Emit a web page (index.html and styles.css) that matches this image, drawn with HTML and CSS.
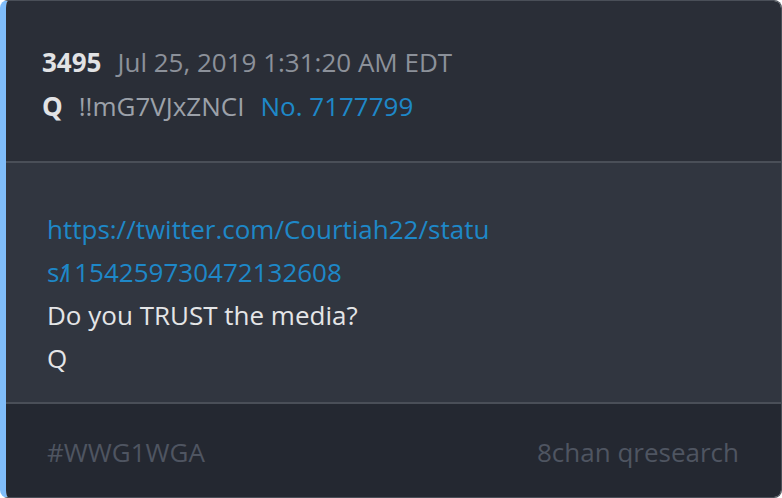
FILE: index.html
```html
<!DOCTYPE html>
<html lang="en">
<head>
  <meta charset="UTF-8" />
  <title>Q drop 3495</title>
  <link rel="stylesheet" href="styles.css">
</head>
<body>

  <div class="post">
    <div class="post-header">
      <div class="meta-row">
        <span class="drop-num">3495</span>
        <span class="date">Jul 25, 2019 1:31:20 AM EDT</span>
      </div>
      <div class="meta-row">
        <span class="author">Q</span>
        <span class="trip">!!mG7VJxZNCI</span>
        <a class="post-no" href="#">No. 7177799</a>
      </div>
    </div>

    <div class="post-body">
      <a class="post-link" href="#">https://twitter.com/Courtiah22/status<span class="tight">/</span>1154259730472132608</a>
      <p>Do you TRUST the media?</p>
      <p>Q</p>
    </div>

    <div class="post-footer">
      <span>#WWG1WGA</span>
      <span>8chan qresearch</span>
    </div>
  </div>

</body>
</html>
```

FILE: styles.css
```css
body {
  margin: 0;
  font-family: 'Open Sans', sans-serif;
  background: #ffffff;
}
.post {
  width: 782px;
  height: 498px;
  box-sizing: border-box;
  display: flex;
  flex-direction: column;
  border: 1px solid #4a4f58;
  border-left: 6px solid #80bdfa;
  border-radius: 8px;
  overflow: hidden;
  font-size: 26px;
  line-height: 43px;
}
.post-header {
  background: #2a2e37;
  padding: 39px 36px 33px;
  border-bottom: 2px solid #4a4f58;
  line-height: 44px;
}
.meta-row {
  display: flex;
  gap: 16px;
}
.drop-num, .author {
  font-weight: 700;
  color: #e2e3e5;
}
.date {
  color: #8c919a;
}
.trip {
  color: #9ca1a9;
}
.post-no {
  color: #1e88c8;
  text-decoration: none;
}
.post-body {
  flex: 1;
  background: #313640;
  padding: 45px 41px 0;
  border-bottom: 2px solid #4a4f58;
  color: #e4e5e7;
}
.post-link {
  display: block;
  width: 450px;
  color: #1e88c8;
  text-decoration: none;
  word-break: break-all;
}
.post-link .tight {
  letter-spacing: -11px;
}
.post-body p {
  margin: 0;
}
.post-footer {
  background: #242831;
  height: 93px;
  flex-shrink: 0;
  box-sizing: border-box;
  padding: 4px 42px 0 41px;
  display: flex;
  align-items: center;
  justify-content: space-between;
  color: #4f5561;
}
```
